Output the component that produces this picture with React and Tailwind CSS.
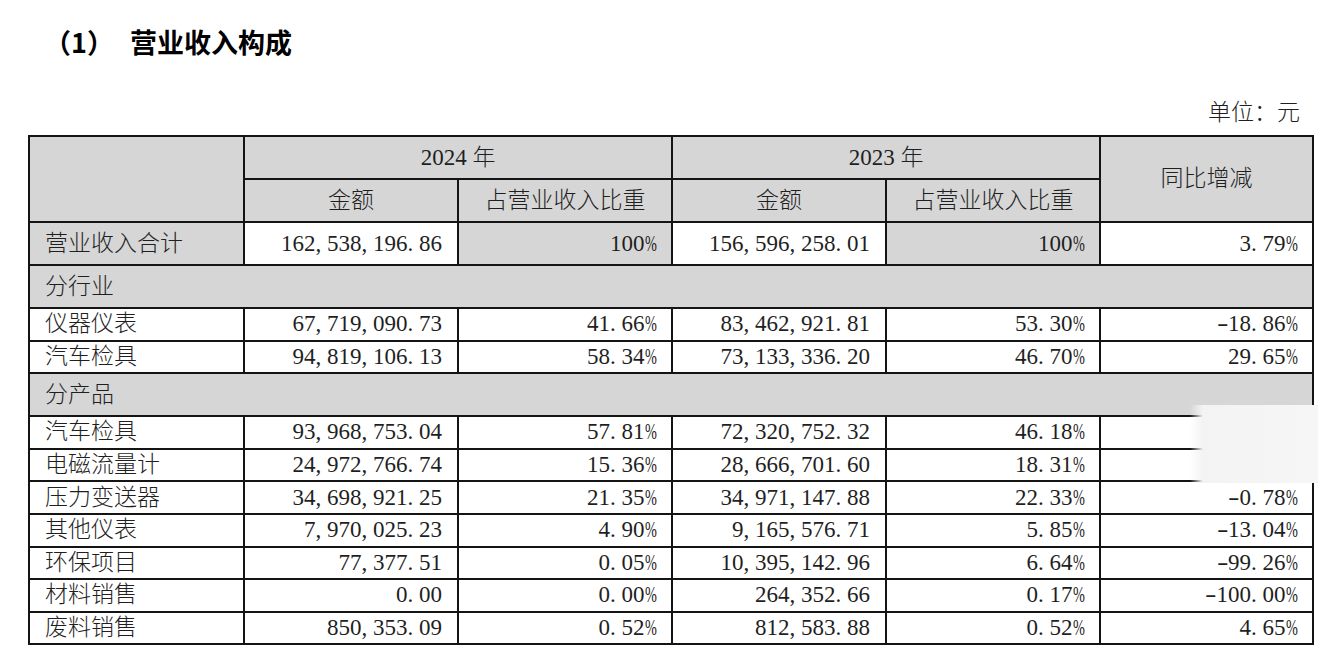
const rows = [
  { type: 'total', name: '营业收入合计', a1: '162,538,196.86', p1: '100%', a2: '156,596,258.01', p2: '100%', yoy: '3.79%' },
  { type: 'section', name: '分行业' },
  { name: '仪器仪表', a1: '67,719,090.73', p1: '41.66%', a2: '83,462,921.81', p2: '53.30%', yoy: '-18.86%' },
  { name: '汽车检具', a1: '94,819,106.13', p1: '58.34%', a2: '73,133,336.20', p2: '46.70%', yoy: '29.65%' },
  { type: 'section', name: '分产品' },
  { name: '汽车检具', a1: '93,968,753.04', p1: '57.81%', a2: '72,320,752.32', p2: '46.18%', yoy: '' },
  { name: '电磁流量计', a1: '24,972,766.74', p1: '15.36%', a2: '28,666,701.60', p2: '18.31%', yoy: '' },
  { name: '压力变送器', a1: '34,698,921.25', p1: '21.35%', a2: '34,971,147.88', p2: '22.33%', yoy: '-0.78%' },
  { name: '其他仪表', a1: '7,970,025.23', p1: '4.90%', a2: '9,165,576.71', p2: '5.85%', yoy: '-13.04%' },
  { name: '环保项目', a1: '77,377.51', p1: '0.05%', a2: '10,395,142.96', p2: '6.64%', yoy: '-99.26%' },
  { name: '材料销售', a1: '0.00', p1: '0.00%', a2: '264,352.66', p2: '0.17%', yoy: '-100.00%' },
  { name: '废料销售', a1: '850,353.09', p1: '0.52%', a2: '812,583.88', p2: '0.52%', yoy: '4.65%' },
]

// 宋体式半角数字：逗号、小数点、百分号都占半个字宽
function N({ v }) {
  return (
    <span className="whitespace-nowrap">
      {[...v].map((c, i) => {
        if (c === ',' || c === '.') return <span key={i} className="inline-block w-[0.5em] text-left">{c}</span>
        if (c === '%') return <span key={i} className="inline-block w-[0.5em] text-left origin-left scale-x-[0.62]">%</span>
        if (c === '-') return <span key={i} className="inline-block w-[0.5em] text-center scale-x-150">-</span>
        return c
      })}
    </span>
  )
}

const cell = 'border-2 border-[#141414] px-[15px] py-0 leading-[26px]'
const gray = 'bg-[#d6d6d6]'
const head = `${cell} ${gray} font-light text-center`

export default function App() {
  return (
    <div className="w-[1332px] h-[662px] bg-white overflow-hidden pl-[28px] pr-[20px] text-[#1f1f1f] font-['Liberation_Serif','Noto_Sans_CJK_SC',serif]">
      <div className="flex pt-[24px] pl-[16px] text-[27px] leading-[36px] font-bold text-black font-['Noto_Sans_CJK_SC',sans-serif]">
        <span className="w-[86px]">（1）</span>
        <span>营业收入构成</span>
      </div>
      <div className="mt-[37px] mb-[6px] pr-[12px] text-right text-[23px] leading-[32px] font-light">
        单位：元
      </div>

      <div className="relative">
        <table className="w-[1284px] table-fixed border-collapse text-[23px] font-light">
          <colgroup>
            <col className="w-[215px]" />
            <col className="w-[214px]" />
            <col className="w-[214px]" />
            <col className="w-[214px]" />
            <col className="w-[214px]" />
            <col className="w-[213px]" />
          </colgroup>
          <thead>
            <tr className="h-[43px]">
              <th rowSpan={2} className={head}></th>
              <th colSpan={2} className={head}>2024 年</th>
              <th colSpan={2} className={head}>2023 年</th>
              <th rowSpan={2} className={head}>同比增减</th>
            </tr>
            <tr className="h-[43px]">
              <th className={head}>金额</th>
              <th className={head}>占营业收入比重</th>
              <th className={head}>金额</th>
              <th className={head}>占营业收入比重</th>
            </tr>
          </thead>
          <tbody>
            {rows.map((r, i) => {
              if (r.type === 'section') {
                return (
                  <tr key={i} className="h-[43px]">
                    <td colSpan={6} className={`${cell} ${gray}`}>{r.name}</td>
                  </tr>
                )
              }
              const total = r.type === 'total'
              return (
                <tr key={i} className={total ? 'h-[43px]' : 'h-[32.6px]'}>
                  <td className={`${cell} ${total ? gray : ''} whitespace-nowrap`}>{r.name}</td>
                  <td className={`${cell} text-right`}><N v={r.a1} /></td>
                  <td className={`${cell} text-right ${total ? gray : ''}`}><N v={r.p1} /></td>
                  <td className={`${cell} text-right`}><N v={r.a2} /></td>
                  <td className={`${cell} text-right ${total ? gray : ''}`}><N v={r.p2} /></td>
                  <td className={`${cell} text-right`}><N v={r.yoy} /></td>
                </tr>
              )
            })}
          </tbody>
        </table>
        {/* 打码区域 */}
        <div className="absolute left-[1162px] top-[270px] w-[128px] h-[78px] bg-[linear-gradient(to_right,rgba(244,244,244,0)_0%,#f3f3f3_10%,#f6f6f6_100%)]" />
      </div>
    </div>
  )
}
